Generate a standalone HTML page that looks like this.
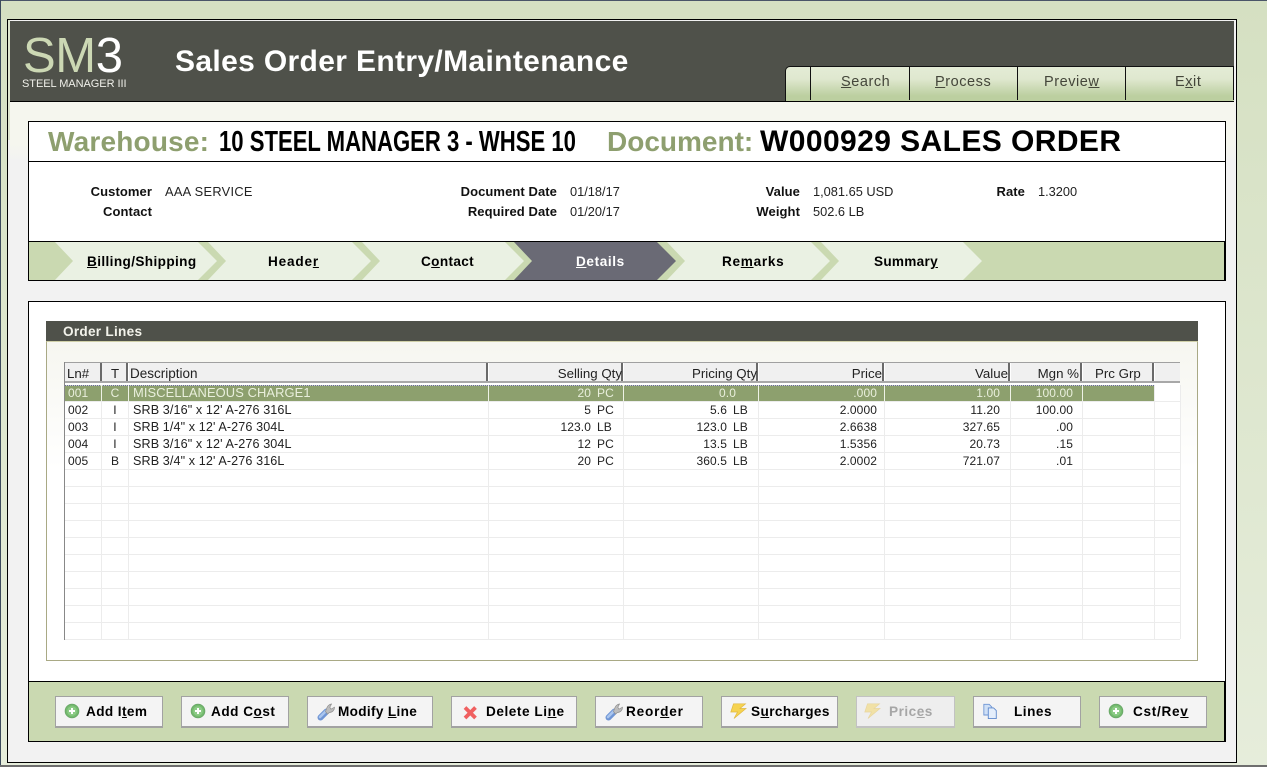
<!DOCTYPE html>
<html>
<head>
<meta charset="utf-8">
<title>Sales Order Entry/Maintenance</title>
<style>
html,body{margin:0;padding:0;width:1267px;height:767px;overflow:hidden;background:#d6e1c4;}
body{position:relative;font-family:"Liberation Sans",Arial,sans-serif;color:#000;}
div,span.t,svg{position:absolute;}
.t{position:absolute;white-space:nowrap;}
.r{text-align:right;}
.c{text-align:center;}
.lab{font-weight:bold;font-size:13px;letter-spacing:.08px;line-height:16px;height:16px;color:#111;text-align:right;white-space:nowrap;}
.val{font-size:12.8px;line-height:16px;height:16px;color:#222;white-space:nowrap;}
.tab{font-weight:bold;font-size:13.6px;letter-spacing:.38px;line-height:16px;height:16px;top:254px;white-space:nowrap;}
.top{font-size:14.5px;letter-spacing:.55px;line-height:16px;height:16px;top:74px;color:#44463a;white-space:nowrap;}
.tb{top:66px;height:34px;width:1px;background:#111;}
.h{top:366px;height:16px;line-height:16px;font-size:13.3px;color:#222;white-space:nowrap;}
.row{left:0;width:1267px;height:16px;}
.row div{height:16px;line-height:16px;font-size:12px;color:#222;white-space:nowrap;letter-spacing:.1px;}
.row div.d{font-size:12.6px;letter-spacing:.1px;}
.sel div{color:#e9efdc;}
.a{left:68px;}
.b{left:102px;width:26px;text-align:center;}
.d{left:133px;}
.e{left:500px;width:91px;text-align:right;}
.f{left:597px;}
.g{left:640px;width:87px;text-align:right;}
.g2{left:640px;width:96px;text-align:right;}
.i{left:733px;}
.j{left:770px;width:107px;text-align:right;}
.k{left:890px;width:110px;text-align:right;}
.l{left:1015px;width:58px;text-align:right;}
.hl{left:65px;width:1115px;height:1px;background:#ececec;}
.vl{top:385px;height:254px;width:1px;background:#ececec;}
.hd{top:363px;height:18px;background:#f0f0f0;border-right:2px solid #6a6a6a;}
.btn{top:696px;height:29px;box-sizing:content-box;background:#f4f4f4;border:1px solid #a2a2a2;border-bottom-width:2px;}
.bt{top:704px;height:16px;line-height:16px;font-weight:bold;font-size:13.6px;letter-spacing:.45px;white-space:nowrap;color:#000;}
</style>
</head>
<body>
<!-- outer window -->
<div style="left:0;top:0;width:1267px;height:767px;background:linear-gradient(#d5e0c2,#e6eddb);"></div>
<div style="left:0;top:0;width:1267px;height:1px;background:#4a5568;"></div>
<div style="left:0;top:0;width:1px;height:767px;background:#3c4a5c;"></div>
<div style="left:0;top:765px;width:1267px;height:2px;background:#6e6e6e;"></div>
<!-- frame -->
<div style="left:7px;top:19px;width:1228px;height:742px;border:1px solid #000;background:#f2f2f2;"></div>
<div style="left:8px;top:20px;width:2px;height:120px;background:#dfe6cf;"></div>
<div style="left:10px;top:102px;width:1225px;height:60px;background:linear-gradient(#f5f6ee,#f5f6ee 70%,#f2f2f2);"></div>
<!-- header -->
<div style="left:10px;top:21px;width:1224px;height:80px;background:#4f514a;"></div>
<div style="left:10px;top:101px;width:1224px;height:1px;background:#000;"></div>
<span class="t" style="left:23px;top:28px;font-size:49px;line-height:56px;color:#ccd8b4;letter-spacing:-.4px;">SM<span style="color:#fff;">3</span></span>
<span class="t" style="left:22px;top:78px;font-size:11px;line-height:13px;color:#f0f0ea;letter-spacing:-.05px;">STEEL MANAGER III</span>
<span class="t" style="left:175px;top:44px;font-size:30px;line-height:36px;font-weight:bold;color:#fff;letter-spacing:.35px;">Sales Order Entry/Maintenance</span>
<!-- top tabs -->
<div style="left:785px;top:66px;width:449px;height:35px;box-sizing:border-box;background:linear-gradient(#e4ecd6,#dfe8cf 35%,#bccfa0 85%);border-top:1px solid #111;border-left:1px solid #111;border-radius:5px 0 0 0;"></div>
<div class="tb" style="left:810px;"></div>
<div class="tb" style="left:909px;"></div>
<div class="tb" style="left:1017px;"></div>
<div class="tb" style="left:1125px;"></div>
<div class="tb" style="left:1233px;"></div>
<span class="t top" style="left:841px;"><u>S</u>earch</span>
<span class="t top" style="left:935px;"><u>P</u>rocess</span>
<span class="t top" style="left:1044px;">Previe<u>w</u></span>
<span class="t top" style="left:1175px;">E<u>x</u>it</span>
<!-- warehouse box -->
<div style="left:28px;top:121px;width:1196px;height:158px;border:1px solid #000;background:#fff;"></div>
<div style="left:28px;top:161px;width:1197px;height:1px;background:#000;"></div>
<span class="t" style="left:48px;top:124px;font-size:28px;letter-spacing:.2px;line-height:36px;font-weight:bold;color:#8e9f6f;">Warehouse:</span>
<span class="t" style="left:219px;top:124px;font-size:29px;line-height:36px;font-weight:bold;color:#000;transform-origin:0 0;transform:scaleX(.762);">10 STEEL MANAGER 3 - WHSE 10</span>
<span class="t" style="left:607px;top:124px;font-size:28px;line-height:36px;font-weight:bold;color:#8e9f6f;">Document:</span>
<span class="t" style="left:760px;top:124px;font-size:30px;letter-spacing:.42px;line-height:36px;font-weight:bold;color:#000;">W000929 SALES ORDER</span>
<!-- info -->
<div class="lab" style="left:52px;width:100px;top:184px;">Customer</div>
<div class="val" style="left:165px;top:184px;letter-spacing:.3px;">AAA SERVICE</div>
<div class="lab" style="left:52px;width:100px;top:204px;">Contact</div>
<div class="lab" style="left:407px;width:150px;top:184px;">Document Date</div>
<div class="val" style="left:570px;top:184px;">01/18/17</div>
<div class="lab" style="left:407px;width:150px;top:204px;">Required Date</div>
<div class="val" style="left:570px;top:204px;">01/20/17</div>
<div class="lab" style="left:700px;width:100px;top:184px;">Value</div>
<div class="val" style="left:813px;top:184px;">1,081.65 USD</div>
<div class="lab" style="left:700px;width:100px;top:204px;">Weight</div>
<div class="val" style="left:813px;top:204px;">502.6 LB</div>
<div class="lab" style="left:925px;width:100px;top:184px;">Rate</div>
<div class="val" style="left:1038px;top:184px;">1.3200</div>
<!-- nav chevrons -->
<svg style="left:28px;top:241px;" width="1197" height="40" viewBox="28 241 1197 40">
<rect x="28.5" y="241.5" width="1196" height="39" fill="#cad9b1" stroke="#000"/>
<g fill="#eaf1e3">
<polygon points="55,242 198,242 217,261 198,280 55,280 73,261"/>
<polygon points="208,242 352,242 371,261 352,280 208,280 226,261"/>
<polygon points="362,242 505,242 524,261 505,280 362,280 380,261"/>
<polygon points="667,242 811,242 830,261 811,280 667,280 685,261"/>
<polygon points="821,242 963,242 982,261 963,280 821,280 839,261"/>
</g>
<polygon points="514,242 657,242 676,261 657,280 514,280 532,261" fill="#6a6a75"/>
<rect x="28" y="241" width="1197" height="1" fill="#000"/>
<rect x="28" y="280" width="1197" height="1" fill="#000"/>
</svg>
<span class="t tab" style="left:87px;"><u>B</u>illing/Shipping</span>
<span class="t tab" style="left:268px;letter-spacing:.8px;">Heade<u>r</u></span>
<span class="t tab" style="left:421px;letter-spacing:.35px;">C<u>o</u>ntact</span>
<span class="t tab" style="left:576px;color:#fff;letter-spacing:.6px;"><u>D</u>etails</span>
<span class="t tab" style="left:722px;letter-spacing:.7px;">Re<u>m</u>arks</span>
<span class="t tab" style="left:874px;letter-spacing:.28px;">Summar<u>y</u></span>
<!-- order box -->
<div style="left:28px;top:301px;width:1196px;height:439px;border:1px solid #000;background:#fff;"></div>
<div style="left:46px;top:321px;width:1152px;height:20px;background:#4f514a;"></div>
<span class="t" style="left:63px;top:324px;font-size:13.6px;line-height:16px;font-weight:bold;color:#f2f2ea;letter-spacing:.27px;">Order Lines</span>
<div style="left:46px;top:341px;width:1150px;height:318px;border:1px solid #a9a985;border-top:1px solid #cfcfa8;background:linear-gradient(#f6f6f0,#fff 40%);"></div>
<!-- grid -->
<div style="left:65px;top:362px;width:1115px;height:277px;background:#fff;"></div>
<div style="left:64px;top:362px;width:1px;height:278px;background:#888;"></div>
<div style="left:65px;top:362px;width:1115px;height:1px;background:#a0a0a0;"></div>
<div class="hd" style="left:65px;width:35px;"></div>
<div class="hd" style="left:102px;width:24px;"></div>
<div class="hd" style="left:129px;width:357px;"></div>
<div class="hd" style="left:489px;width:132px;"></div>
<div class="hd" style="left:624px;width:132px;"></div>
<div class="hd" style="left:759px;width:123px;"></div>
<div class="hd" style="left:885px;width:123px;"></div>
<div class="hd" style="left:1011px;width:69px;"></div>
<div class="hd" style="left:1083px;width:69px;"></div>
<div class="hd" style="left:1155px;width:25px;border-right:0;"></div>
<div style="left:65px;top:381px;width:1115px;height:2px;background:#a8a8a8;"></div>
<span class="t h" style="left:67px;">Ln#</span>
<span class="t h c" style="left:102px;width:26px;">T</span>
<span class="t h" style="left:130px;font-size:13.5px;">Description</span>
<span class="t h r" style="left:500px;width:122px;">Selling Qty</span>
<span class="t h r" style="left:640px;width:117px;">Pricing Qty</span>
<span class="t h r" style="left:780px;width:102px;">Price</span>
<span class="t h r" style="left:900px;width:108px;">Value</span>
<span class="t h r" style="left:1015px;width:64px;">Mgn %</span>
<span class="t h" style="left:1095px;">Prc Grp</span>
<!-- grid lines -->
<div class="vl" style="left:101px;"></div>
<div class="vl" style="left:128px;"></div>
<div class="vl" style="left:488px;"></div>
<div class="vl" style="left:623px;"></div>
<div class="vl" style="left:758px;"></div>
<div class="vl" style="left:884px;"></div>
<div class="vl" style="left:1010px;"></div>
<div class="vl" style="left:1082px;"></div>
<div class="vl" style="left:1154px;"></div>
<div class="vl" style="left:1180px;"></div>
<div class="hl" style="top:401px;"></div>
<div class="hl" style="top:418px;"></div>
<div class="hl" style="top:435px;"></div>
<div class="hl" style="top:452px;"></div>
<div class="hl" style="top:469px;"></div>
<div class="hl" style="top:486px;"></div>
<div class="hl" style="top:503px;"></div>
<div class="hl" style="top:520px;"></div>
<div class="hl" style="top:537px;"></div>
<div class="hl" style="top:554px;"></div>
<div class="hl" style="top:571px;"></div>
<div class="hl" style="top:588px;"></div>
<div class="hl" style="top:605px;"></div>
<div class="hl" style="top:622px;"></div>
<div class="hl" style="top:639px;"></div>
<!-- selected row -->
<div style="left:65px;top:385px;width:1089px;height:16px;background:#8da06e;"></div>
<div style="left:65px;top:385px;width:1089px;height:1px;background:repeating-linear-gradient(90deg,#6a6a9a 0 1px,#c8d0c0 1px 2px);"></div>
<div style="left:101px;top:385px;width:1px;height:16px;background:#eef2e6;"></div>
<div style="left:128px;top:385px;width:1px;height:16px;background:#eef2e6;"></div>
<div style="left:488px;top:385px;width:1px;height:16px;background:#eef2e6;"></div>
<div style="left:623px;top:385px;width:1px;height:16px;background:#eef2e6;"></div>
<div style="left:758px;top:385px;width:1px;height:16px;background:#eef2e6;"></div>
<div style="left:884px;top:385px;width:1px;height:16px;background:#eef2e6;"></div>
<div style="left:1010px;top:385px;width:1px;height:16px;background:#eef2e6;"></div>
<div style="left:1082px;top:385px;width:1px;height:16px;background:#eef2e6;"></div>
<!-- rows -->
<div class="row sel" style="top:385px;"><div class="a">001</div><div class="b">C</div><div class="d" style="font-size:12.9px;">MISCELLANEOUS CHARGE1</div><div class="e">20</div><div class="f">PC</div><div class="g2">0.0</div><div class="j">.000</div><div class="k">1.00</div><div class="l">100.00</div></div>
<div class="row" style="top:402px;"><div class="a">002</div><div class="b">I</div><div class="d">SRB 3/16" x 12' A-276 316L</div><div class="e">5</div><div class="f">PC</div><div class="g">5.6</div><div class="i">LB</div><div class="j">2.0000</div><div class="k">11.20</div><div class="l">100.00</div></div>
<div class="row" style="top:419px;"><div class="a">003</div><div class="b">I</div><div class="d">SRB 1/4" x 12' A-276 304L</div><div class="e">123.0</div><div class="f">LB</div><div class="g">123.0</div><div class="i">LB</div><div class="j">2.6638</div><div class="k">327.65</div><div class="l">.00</div></div>
<div class="row" style="top:436px;"><div class="a">004</div><div class="b">I</div><div class="d">SRB 3/16" x 12' A-276 304L</div><div class="e">12</div><div class="f">PC</div><div class="g">13.5</div><div class="i">LB</div><div class="j">1.5356</div><div class="k">20.73</div><div class="l">.15</div></div>
<div class="row" style="top:453px;"><div class="a">005</div><div class="b">B</div><div class="d">SRB 3/4" x 12' A-276 316L</div><div class="e">20</div><div class="f">PC</div><div class="g">360.5</div><div class="i">LB</div><div class="j">2.0002</div><div class="k">721.07</div><div class="l">.01</div></div>
<!-- toolbar -->
<div style="left:29px;top:681px;width:1196px;height:59px;background:#cad9b1;border-top:1px solid #000;border-bottom:1px solid #000;"></div>
<div style="left:28px;top:681px;width:1px;height:60px;background:#000;"></div>
<div style="left:1224px;top:681px;width:1px;height:60px;background:#000;"></div>
<div class="btn" style="left:55px;width:106px;"></div>
<div class="btn" style="left:181px;width:106px;"></div>
<div class="btn" style="left:307px;width:124px;"></div>
<div class="btn" style="left:451px;width:124px;"></div>
<div class="btn" style="left:595px;width:106px;"></div>
<div class="btn" style="left:721px;width:115px;"></div>
<div class="btn" style="left:856px;width:97px;background:#eeeeee;border-color:#c2c2c2;"></div>
<div class="btn" style="left:973px;width:106px;"></div>
<div class="btn" style="left:1099px;width:106px;"></div>
<span class="t bt" style="left:86px;letter-spacing:.4px;">Add I<u>t</u>em</span>
<span class="t bt" style="left:211px;letter-spacing:.5px;">Add C<u>o</u>st</span>
<span class="t bt" style="left:338px;letter-spacing:.33px;">Modify <u>L</u>ine</span>
<span class="t bt" style="left:486px;letter-spacing:.55px;">Delete Li<u>n</u>e</span>
<span class="t bt" style="left:626px;letter-spacing:.8px;">Reor<u>d</u>er</span>
<span class="t bt" style="left:751px;letter-spacing:.4px;">S<u>u</u>rcharges</span>
<span class="t bt" style="left:889px;color:#a6a6a6;letter-spacing:.5px;">Pric<u>e</u>s</span>
<span class="t bt" style="left:1014px;letter-spacing:.5px;">Lines</span>
<span class="t bt" style="left:1133px;letter-spacing:.7px;">Cst/Re<u>v</u></span>
<!-- icons -->
<svg style="left:64px;top:703px;" width="16" height="16" viewBox="0 0 16 16"><circle cx="8" cy="8" r="6.8" fill="#74bb6e" stroke="#6aa868"/><circle cx="8" cy="8" r="4.8" fill="#8ccb86"/><path d="M8 5v6M5 8h6" stroke="#fff" stroke-width="2"/></svg>
<svg style="left:190px;top:703px;" width="16" height="16" viewBox="0 0 16 16"><circle cx="8" cy="8" r="6.8" fill="#74bb6e" stroke="#6aa868"/><circle cx="8" cy="8" r="4.8" fill="#8ccb86"/><path d="M8 5v6M5 8h6" stroke="#fff" stroke-width="2"/></svg>
<svg style="left:1108px;top:703px;" width="16" height="16" viewBox="0 0 16 16"><circle cx="8" cy="8" r="6.8" fill="#74bb6e" stroke="#6aa868"/><circle cx="8" cy="8" r="4.8" fill="#8ccb86"/><path d="M8 5v6M5 8h6" stroke="#fff" stroke-width="2"/></svg>
<svg style="left:317px;top:703px;" width="18" height="18" viewBox="0 0 18 18"><path d="M3.5 14.5L9.5 8.5" stroke="#6f95d4" stroke-width="6" stroke-linecap="round"/><path d="M3 14L9 8" stroke="#a9c5ee" stroke-width="2.6" stroke-linecap="round"/><path d="M8.5 8.5L10 4.5C10.5 3 12.5 1.2 14.5 1L12.8 4.2 14 6.2 17.5 4.2C17.5 7 15.5 9.5 12.5 9.5L10.5 11z" fill="#bdbdbd" stroke="#8f8f8f" stroke-width=".7"/></svg>
<svg style="left:605px;top:703px;" width="18" height="18" viewBox="0 0 18 18"><path d="M3.5 14.5L9.5 8.5" stroke="#6f95d4" stroke-width="6" stroke-linecap="round"/><path d="M3 14L9 8" stroke="#a9c5ee" stroke-width="2.6" stroke-linecap="round"/><path d="M8.5 8.5L10 4.5C10.5 3 12.5 1.2 14.5 1L12.8 4.2 14 6.2 17.5 4.2C17.5 7 15.5 9.5 12.5 9.5L10.5 11z" fill="#bdbdbd" stroke="#8f8f8f" stroke-width=".7"/></svg>
<svg style="left:463px;top:705px;" width="15" height="15" viewBox="0 0 15 15"><path d="M2 2.5L12.5 13M12.5 2.5L2 13" stroke="#f06060" stroke-width="3.8"/></svg>
<svg style="left:730px;top:703px;" width="17" height="16" viewBox="0 0 17 16"><path d="M3.5 .8H15.5L10 5.5H16L4 15.5 7.5 9H.8z" fill="#f6d350" stroke="#e0b840" stroke-width=".7"/></svg>
<svg style="left:864px;top:703px;opacity:.45;" width="17" height="16" viewBox="0 0 17 16"><path d="M3.5 .8H15.5L10 5.5H16L4 15.5 7.5 9H.8z" fill="#f6d350" stroke="#e0b840" stroke-width=".7"/></svg>
<svg style="left:982px;top:703px;" width="17" height="16" viewBox="0 0 18 18"><path d="M1.5 1.5H7.5L10.5 4.5V13.5H1.5z" fill="#cfe0f6" stroke="#6e95d4"/><path d="M6.5 5.5H12.5L15.5 8.5V17.5H6.5z" fill="#e4eefb" stroke="#5d88cc"/></svg>
</body>
</html>
